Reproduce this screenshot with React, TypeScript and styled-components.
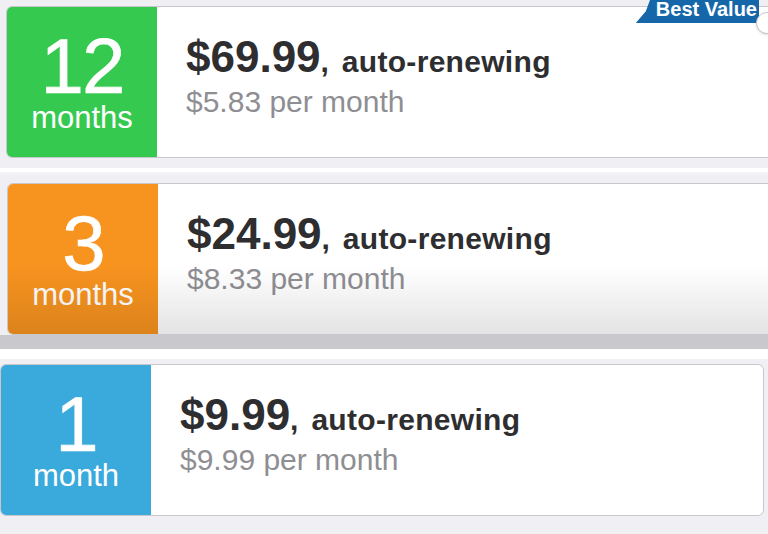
import React from 'react';
import styled, { createGlobalStyle } from 'styled-components';

const GlobalStyle = createGlobalStyle`
  html, body {
    margin: 0;
    padding: 0;
    background: #ffffff;
  }
  body {
    font-family: 'Liberation Sans', Arial, Helvetica, sans-serif;
    width: 768px;
    height: 534px;
    overflow: hidden;
  }
`;

const Page = styled.div`
  width: 768px;
  height: 534px;
  overflow: hidden;
  display: flex;
  flex-direction: column;
  background: #ffffff;
`;

const Row = styled.div<{ $top: number; $gap: number; $pressed?: boolean }>`
  position: relative;
  padding-top: ${(p) => p.$top}px;
  background: #efeff4;
  margin-bottom: ${(p) => p.$gap}px;
  flex-shrink: 0;

  ${(p) =>
    p.$pressed
      ? `
    padding-bottom: 14px;
    background: linear-gradient(#f7f7f9 0, #efeff4 3px, #efeff4 calc(100% - 14px), #c8c8cd calc(100% - 14px));
  `
      : `
    padding-bottom: 10px;
  `}

  &:last-child {
    flex: 1;
  }
`;

const Card = styled.div<{ $pressed?: boolean; $left: number; $right: number }>`
  position: relative;
  height: 150px;
  display: flex;
  margin-left: ${(p) => p.$left}px;
  margin-right: ${(p) => p.$right}px;
  background: #ffffff;
  border: 1px solid #c7c7cc;
  border-radius: 6px;

  ${(p) =>
    p.$pressed &&
    `
    &::after {
      content: '';
      position: absolute;
      inset: 0;
      border-radius: 5px;
      background: linear-gradient(rgba(0,0,0,0) 0, rgba(0,0,0,0) 55%, rgba(0,0,0,0.11) 100%);
      pointer-events: none;
    }
  `}
`;

const Term = styled.div<{ $color: string }>`
  width: 150px;
  flex-shrink: 0;
  background: ${(p) => p.$color};
  border-radius: 5px 0 0 5px;
  color: #ffffff;
  display: flex;
  flex-direction: column;
  align-items: center;
  padding-top: 27px;
  box-sizing: border-box;
`;

const TermNumber = styled.div`
  font-size: 78px;
  line-height: 64px;
  letter-spacing: -2px;
  -webkit-text-stroke: 0.6px #ffffff;
`;

const TermUnit = styled.div`
  margin-top: 6px;
  font-size: 31px;
  line-height: 28px;
`;

const Info = styled.div`
  padding: 29px 0 0 29px;
  display: flex;
  flex-direction: column;
`;

const Price = styled.div`
  line-height: 42px;
  color: #2e2e30;
  font-weight: 700;
  white-space: nowrap;

  strong {
    font-size: 44px;
  }

  span {
    font-size: 30px;
    letter-spacing: 0.3px;
    word-spacing: 4px;
  }
`;

const PerMonth = styled.div`
  margin-top: -4px;
  font-size: 30px;
  line-height: 36px;
  color: #8e8e93;
  white-space: nowrap;
`;

const Badge = styled.div`
  position: absolute;
  top: -12px;
  right: 16px;
  height: 28px;
  padding: 0 2px 0 20px;
  background: #1567aa;
  color: #ffffff;
  font-size: 20px;
  font-weight: 700;
  line-height: 28px;
  clip-path: polygon(16px 0, 100% 0, 100% 100%, 0 100%, 10px 58%);
  white-space: nowrap;
`;

const Radio = styled.div`
  position: absolute;
  top: 5px;
  right: -3px;
  width: 20px;
  height: 20px;
  border-radius: 50%;
  background: #ffffff;
  border: 1px solid #c7c7cc;
  box-shadow: 0 1px 2px rgba(0, 0, 0, 0.15);
`;

type Plan = {
  count: string;
  unit: string;
  color: string;
  price: string;
  perMonth: string;
};

const plans: Plan[] = [
  { count: '12', unit: 'months', color: '#35c94f', price: '$69.99', perMonth: '$5.83 per month' },
  { count: '3', unit: 'months', color: '#f7931f', price: '$24.99', perMonth: '$8.33 per month' },
  { count: '1', unit: 'month', color: '#3aa9db', price: '$9.99', perMonth: '$9.99 per month' },
];

type PlanCardProps = {
  plan: Plan;
  left: number;
  right: number;
  pressed?: boolean;
  children?: React.ReactNode;
};

const PlanCard = ({ plan, left, right, pressed, children }: PlanCardProps) => (
  <Card $pressed={pressed} $left={left} $right={right}>
    <Term $color={plan.color}>
      <TermNumber>{plan.count}</TermNumber>
      <TermUnit>{plan.unit}</TermUnit>
    </Term>
    <Info>
      <Price>
        <strong>{plan.price}</strong>
        <span>, auto-renewing</span>
      </Price>
      <PerMonth>{plan.perMonth}</PerMonth>
    </Info>
    {children}
  </Card>
);

const App = () => {
  return (
    <Page>
      <GlobalStyle />
      <Row $top={6} $gap={4}>
        <PlanCard plan={plans[0]} left={6} right={-8}>
          <Badge>Best Value</Badge>
          <Radio />
        </PlanCard>
      </Row>
      <Row $top={11} $gap={10} $pressed>
        <PlanCard plan={plans[1]} left={7} right={-8} pressed />
      </Row>
      <Row $top={5} $gap={0}>
        <PlanCard plan={plans[2]} left={0} right={4} />
      </Row>
    </Page>
  );
};

export default App;
